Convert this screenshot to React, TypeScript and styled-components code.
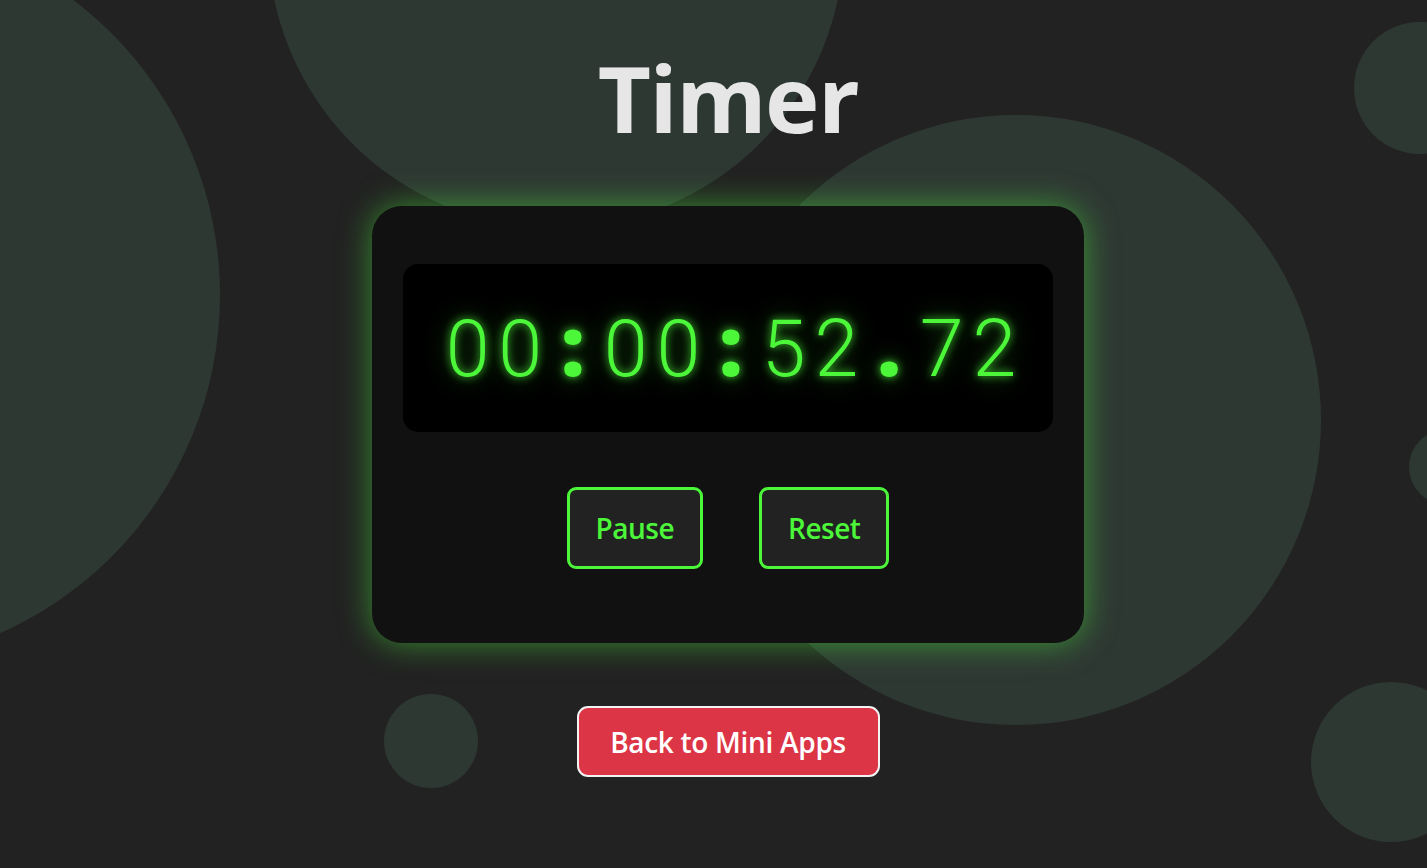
import React from "react";
import styled, { createGlobalStyle } from "styled-components";

const GlobalStyle = createGlobalStyle`
  html, body {
    margin: 0;
    padding: 0;
    background: #222222;
    height: 100%;
    overflow: hidden;
  }
  body {
    font-family: "Open Sans", "Noto Sans", sans-serif;
  }
`;

const Page = styled.div`
  position: relative;
  width: 1427px;
  height: 868px;
  overflow: hidden;
  background: #222222;
`;

const Bubble = styled.div<{ $x: number; $y: number; $r: number }>`
  position: absolute;
  left: ${(p) => p.$x - p.$r}px;
  top: ${(p) => p.$y - p.$r}px;
  width: ${(p) => p.$r * 2}px;
  height: ${(p) => p.$r * 2}px;
  border-radius: 50%;
  background: #2e3833;
`;

const Content = styled.main`
  position: relative;
  z-index: 1;
  display: flex;
  flex-direction: column;
  align-items: center;
  padding-left: 29px;
  padding-top: 38px;
`;

const Title = styled.h1`
  margin: 0;
  font-family: "Open Sans", "Noto Sans", sans-serif;
  font-weight: 700;
  font-size: 92px;
  line-height: 120px;
  color: #e6e6e6;
  letter-spacing: -1.5px;
`;

const Card = styled.section`
  margin-top: 48px;
  width: 712px;
  height: 437px;
  box-sizing: border-box;
  padding: 58px 31px 0;
  background: #111111;
  border-radius: 30px;
  box-shadow: 0 0 32px rgba(76, 247, 58, 0.5);
  display: flex;
  flex-direction: column;
  align-items: center;
`;

const Display = styled.div`
  width: 100%;
  height: 168px;
  background: #000000;
  border-radius: 15px;
  display: flex;
  align-items: center;
  justify-content: center;
`;

const Digits = styled.div`
  display: flex;
  align-items: baseline;
  padding-left: 6px;
  margin-top: -6px;
`;

const Glyph = styled.span<{ $punct?: boolean }>`
  display: inline-block;
  width: 52.7px;
  text-align: center;
  font-family: ${(p) =>
    p.$punct ? `"Open Sans", "Noto Sans", sans-serif` : `Roboto, "Liberation Sans", sans-serif`};
  font-weight: ${(p) => (p.$punct ? 800 : 300)};
  font-size: ${(p) => (p.$punct ? "84px" : "79px")};
  line-height: 1;
  color: #4cf73a;
  text-shadow: 0 0 8px rgba(76, 247, 58, 0.85), 0 0 24px rgba(76, 247, 58, 0.45);
`;

const Controls = styled.div`
  margin-top: 55px;
  display: flex;
  gap: 56px;
`;

const ControlButton = styled.button`
  height: 82px;
  box-sizing: border-box;
  padding: 0 26px;
  background: #222222;
  border: 3px solid #4cf73a;
  border-radius: 9px;
  color: #4cf73a;
  font-family: "Open Sans", "Noto Sans", sans-serif;
  font-weight: 600;
  font-size: 28px;
  letter-spacing: -0.5px;
  cursor: pointer;
`;

const BackButton = styled.button`
  margin-top: 63px;
  width: 303px;
  height: 71px;
  background: #dc3545;
  border: 2px solid #f2f2f2;
  border-radius: 11px;
  color: #ffffff;
  font-family: "Open Sans", "Noto Sans", sans-serif;
  font-weight: 600;
  font-size: 28px;
  letter-spacing: -0.3px;
  cursor: pointer;
`;

const bubbles = [
  { x: -150, y: 295, r: 370 },
  { x: 556, y: -60, r: 288 },
  { x: 1016, y: 420, r: 305 },
  { x: 1420, y: 88, r: 66 },
  { x: 1447, y: 467, r: 38 },
  { x: 1391, y: 762, r: 80 },
  { x: 431, y: 741, r: 47 },
];

const time = "00:00:52.72";

export default function App() {
  return (
    <>
      <GlobalStyle />
      <Page>
        {bubbles.map((b, i) => (
          <Bubble key={i} $x={b.x} $y={b.y} $r={b.r} />
        ))}
        <Content>
          <Title>Timer</Title>
          <Card>
            <Display>
              <Digits aria-label={time}>
                {time.split("").map((c, i) => (
                  <Glyph key={i} $punct={c === ":" || c === "."}>
                    {c}
                  </Glyph>
                ))}
              </Digits>
            </Display>
            <Controls>
              <ControlButton>Pause</ControlButton>
              <ControlButton>Reset</ControlButton>
            </Controls>
          </Card>
          <BackButton>Back to Mini Apps</BackButton>
        </Content>
      </Page>
    </>
  );
}
